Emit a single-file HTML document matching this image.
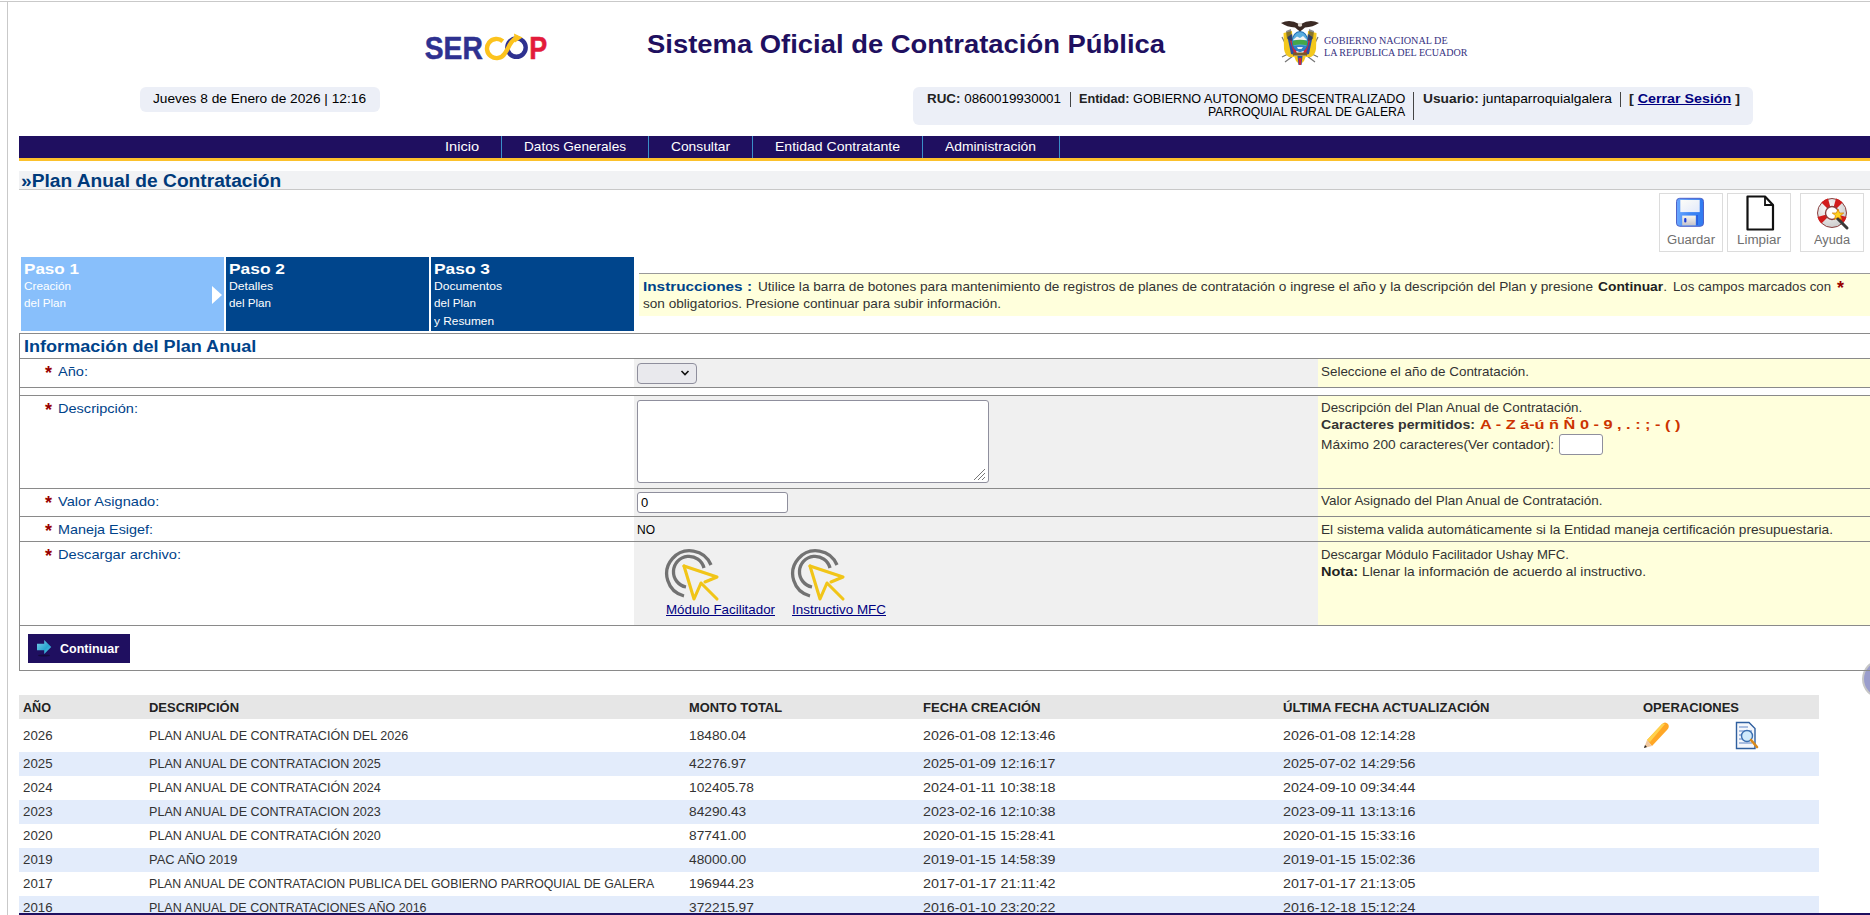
<!DOCTYPE html>
<html><head><meta charset="utf-8"><style>
html,body{margin:0;padding:0;background:#fff;width:1870px;height:915px;overflow:hidden;position:relative;font-family:"Liberation Sans",sans-serif}
.t{position:absolute;white-space:nowrap;transform-origin:0 0}
.r{position:absolute}
</style></head><body>
<div class="r" style="left:1862px;top:660px;width:32px;height:34px;border-radius:50%;background:#9a9dcc;border:2px solid #c6c6c6"></div>
<!-- page frame -->
<div class="r" style="left:0;top:1px;width:1870px;height:1px;background:#c9c9c9"></div>
<div class="r" style="left:7px;top:1px;width:1px;height:914px;background:#c9c9c9"></div>

<!-- SERCOP logo -->
<svg class="r" style="left:420px;top:30px" width="135" height="35" viewBox="420 30 135 35">
  <text x="424.8" y="58.8" font-family="Liberation Sans" font-weight="bold" font-size="31.5" fill="#2e3190" stroke="#2e3190" stroke-width="0.5" textLength="58" lengthAdjust="spacingAndGlyphs">SER</text>
  <circle cx="516.5" cy="47.6" r="9.2" fill="none" stroke="#2e3190" stroke-width="4.4"/>
  <path d="M502.8,41.2 A9.6,9.6 0 1 0 504.6,53.8 L507.6,49 C510.6,42 513,39 518,37" fill="none" stroke="#fcc31e" stroke-width="4.4"/>
  <path d="M514,33.5 L522.5,37.5 L515,42.5 Z" fill="#fcc31e"/>
  <text x="529.2" y="58.8" font-family="Liberation Sans" font-weight="bold" font-size="31.5" fill="#e31b3b" stroke="#e31b3b" stroke-width="0.5" textLength="18" lengthAdjust="spacingAndGlyphs">P</text>
</svg>

<!-- Coat of arms -->
<svg class="r" style="left:1276px;top:15px" width="48" height="54" viewBox="0 0 48 54">
  <path d="M6,22 L14,38 M42,22 L34,38" stroke="#777" stroke-width="1.2"/>
  <path d="M6,42 L16,37 M42,42 L32,37 M9,47 L17,41 M39,47 L31,41" stroke="#777" stroke-width="1.2"/>
  <path d="M7.5,18 L16,16 L18,42 L13,42 Q9,40 8,34 Z" fill="#f3c81c"/>
  <path d="M40.5,18 L32,16 L30,42 L35,42 Q39,40 40,34 Z" fill="#f3c81c"/>
  <path d="M11.5,22 L16,19 L19,40 L15,39 Z" fill="#2b4fa2"/>
  <path d="M36.5,22 L32,19 L29,40 L33,39 Z" fill="#2b4fa2"/>
  <path d="M14,26 L17,23 L21,39 L18,38 Z" fill="#d0263a"/>
  <path d="M34,26 L31,23 L27,39 L30,38 Z" fill="#d0263a"/>
  <path d="M10,16 L15,14 L16,26 L11,24 Z" fill="#333" opacity="0.55"/>
  <path d="M38,16 L33,14 L32,26 L37,24 Z" fill="#333" opacity="0.55"/>
  <ellipse cx="24" cy="26.5" rx="8.3" ry="10.5" fill="#1f6fb5"/>
  <ellipse cx="24" cy="26.5" rx="7.3" ry="9.5" fill="#5aaee0"/>
  <path d="M17,25 L21,21.5 L24,23 L27,21 L31,25 Z" fill="#f4f4f4"/>
  <path d="M16.8,26 Q24,23.5 31.2,26 L31,30.5 Q24,28.5 17,30.5 Z" fill="#46a64a"/>
  <path d="M17.5,31 Q24,29.5 30.5,31 Q29,36 24,36.5 Q19,36 17.5,31 Z" fill="#2f7fc6"/>
  <path d="M21,32 L27,32 L25.5,34 L22,34 Z" fill="#eee"/>
  <rect x="17" y="37.5" width="14" height="3.2" fill="#7a5a28"/>
  <path d="M18,41 L22,41 L23,49 L20,46 Z" fill="#f3c81c"/>
  <path d="M30,41 L26,41 L25,49 L28,46 Z" fill="#f3c81c"/>
  <path d="M21.5,41 L26.5,41 L25.5,50 L22.5,50 Z" fill="#2b4fa2"/>
  <path d="M22.5,43 L25.5,43 L25,50 L23,50 Z" fill="#d0263a"/>
  <path d="M5,8 Q14,3.5 23,9 Q24,8 25,9 Q34,3.5 43,8 Q37,12 29,12.5 L26,15 L24,16.5 L22,15 L19,12.5 Q11,12 5,8 Z" fill="#3b2a24"/>
  <ellipse cx="24" cy="10" rx="2.2" ry="1.8" fill="#e8e0d8"/>
</svg>

<!-- date box & user box -->
<div class="r" style="left:140px;top:87px;width:240px;height:25px;border-radius:6px;background:#eceff7"></div>
<div class="r" style="left:913px;top:87px;width:840px;height:38px;border-radius:6px;background:#eceff7"></div>
<div class="r" style="left:1070px;top:92px;width:1px;height:15px;background:#444"></div>
<div class="r" style="left:1413px;top:92px;width:1px;height:28px;background:#444"></div>
<div class="r" style="left:1620px;top:92px;width:1px;height:15px;background:#444"></div>

<!-- nav -->
<div class="r" style="left:19px;top:136px;width:1851px;height:22px;background:#1f0f60"></div>
<div class="r" style="left:19px;top:158px;width:1851px;height:3px;background:#fcc12b"></div>
<div class="r" style="left:501px;top:136px;width:1px;height:22px;background:#3a8fc8"></div>
<div class="r" style="left:648px;top:136px;width:1px;height:22px;background:#3a8fc8"></div>
<div class="r" style="left:752px;top:136px;width:1px;height:22px;background:#3a8fc8"></div>
<div class="r" style="left:922px;top:136px;width:1px;height:22px;background:#3a8fc8"></div>
<div class="r" style="left:1059px;top:136px;width:1px;height:22px;background:#3a8fc8"></div>

<!-- title bar -->
<div class="r" style="left:19px;top:171px;width:1851px;height:18px;background:#f1f2f4"></div>
<div class="r" style="left:19px;top:189px;width:1851px;height:1px;background:#c8c8c8"></div>

<!-- toolbar -->
<div class="r" style="left:1659px;top:193px;width:62px;height:57px;border:1px solid #dcdcdc"></div>
<div class="r" style="left:1727px;top:193px;width:62px;height:57px;border:1px solid #dcdcdc"></div>
<div class="r" style="left:1800px;top:193px;width:62px;height:57px;border:1px solid #dcdcdc"></div>
<svg class="r" style="left:1675px;top:197px" width="31" height="32" viewBox="0 0 31 32">
  <defs>
    <linearGradient id="fg" x1="0" y1="0" x2="1" y2="0"><stop offset="0" stop-color="#6aa8ff"/><stop offset="0.5" stop-color="#3f86f5"/><stop offset="1" stop-color="#2f7af0"/></linearGradient>
    <linearGradient id="fl" x1="0" y1="0" x2="1" y2="1"><stop offset="0" stop-color="#fdfdf8"/><stop offset="1" stop-color="#e2e9fb"/></linearGradient>
    <linearGradient id="fs" x1="0" y1="0" x2="0" y2="1"><stop offset="0" stop-color="#f8f6ee"/><stop offset="1" stop-color="#c4c2cc"/></linearGradient>
  </defs>
  <rect x="1.5" y="1.3" width="27" height="28" rx="3.2" fill="url(#fg)" stroke="#4f62c8" stroke-width="1"/>
  <rect x="5.3" y="2.9" width="19.4" height="12.2" fill="url(#fl)"/>
  <rect x="7.2" y="18.6" width="13.6" height="9.8" fill="url(#fs)"/>
  <rect x="9.2" y="21" width="2.2" height="4.4" rx="1" fill="#1638d8"/>
  <rect x="21.2" y="18" width="1.8" height="10" fill="#2a5fe0"/>
</svg>
<svg class="r" style="left:1745px;top:195px" width="32" height="37" viewBox="0 0 32 37">
  <path d="M2.5,1.5 L20,1.5 L28,10 L28,34.5 L2.5,34.5 Z" fill="#fff" stroke="#111" stroke-width="2.2" stroke-linejoin="round"/>
  <path d="M20,1.5 L20,10 L28,10" fill="none" stroke="#111" stroke-width="1.8"/>
</svg>
<svg class="r" style="left:1815px;top:196px" width="36" height="36" viewBox="0 0 36 36">
  <defs><radialGradient id="lb" cx="0.4" cy="0.35" r="0.7"><stop offset="0" stop-color="#ffffff"/><stop offset="1" stop-color="#c9c9c9"/></radialGradient></defs>
  <circle cx="17" cy="17" r="14.5" fill="url(#lb)" stroke="#8a4040" stroke-width="1"/>
  <g fill="#d21c1c">
    <path d="M17,17 L6.4,6.4 A15,15 0 0 1 13,2.5 Z"/>
    <path d="M17,17 L21,2.5 A15,15 0 0 1 27.6,6.4 Z"/>
    <path d="M17,17 L2.5,21 A15,15 0 0 0 6.4,27.6 Z"/>
    <path d="M17,17 L27.6,27.6 A15,15 0 0 0 31.5,21 Z"/>
  </g>
  <circle cx="17" cy="17" r="6.5" fill="#fff" stroke="#8a4040" stroke-width="1.4"/>
  <path d="M22,22 L32,32" stroke="#3a3a3a" stroke-width="3" stroke-linecap="round"/>
  <path d="M23,13 L24.6,17 L28.8,17 L25.5,19.6 L26.6,23.6 L23,21.2 L19.4,23.6 L20.5,19.6 L17.2,17 L21.4,17 Z" fill="#ffd21f" stroke="#d67a00" stroke-width="0.7"/>
</svg>

<!-- steps -->
<div class="r" style="left:21px;top:257px;width:203px;height:74px;background:#88bffb"></div>
<div class="r" style="left:226px;top:257px;width:203px;height:74px;background:#00458c"></div>
<div class="r" style="left:431px;top:257px;width:203px;height:74px;background:#00458c"></div>
<svg class="r" style="left:210px;top:284px" width="14" height="22" viewBox="0 0 14 22"><path d="M2,2 L12,11 L2,20 Z" fill="#fff"/></svg>

<!-- instructions -->
<div class="r" style="left:639px;top:273px;width:1231px;height:1px;background:#999"></div>
<div class="r" style="left:639px;top:274px;width:1231px;height:42px;background:#ffffdc"></div>

<!-- form background columns -->
<div class="r" style="left:634px;top:359px;width:684px;height:28px;background:#f0f0f0"></div>
<div class="r" style="left:1318px;top:359px;width:552px;height:28px;background:#ffffdc"></div>
<div class="r" style="left:634px;top:396px;width:684px;height:229px;background:#f0f0f0"></div>
<div class="r" style="left:1318px;top:396px;width:552px;height:229px;background:#ffffdc"></div>

<!-- form lines -->
<div class="r" style="left:19px;top:333px;width:1851px;height:1px;background:#8a8a8a"></div>
<div class="r" style="left:19px;top:358px;width:1851px;height:1px;background:#8a8a8a"></div>
<div class="r" style="left:19px;top:387px;width:1851px;height:1px;background:#8a8a8a"></div>
<div class="r" style="left:19px;top:395px;width:1851px;height:1px;background:#8a8a8a"></div>
<div class="r" style="left:19px;top:488px;width:1851px;height:1px;background:#8a8a8a"></div>
<div class="r" style="left:19px;top:516px;width:1851px;height:1px;background:#8a8a8a"></div>
<div class="r" style="left:19px;top:541px;width:1851px;height:1px;background:#8a8a8a"></div>
<div class="r" style="left:19px;top:625px;width:1851px;height:1px;background:#8a8a8a"></div>
<div class="r" style="left:19px;top:670px;width:1851px;height:1px;background:#8a8a8a"></div>
<div class="r" style="left:19px;top:333px;width:1px;height:338px;background:#8a8a8a"></div>

<!-- controls -->
<div class="r" style="left:637px;top:363px;width:58px;height:19px;border:1px solid #8f8f9d;border-radius:4px;background:#e9e9ed"></div>
<svg class="r" style="left:680px;top:369px" width="10" height="8" viewBox="0 0 10 8"><path d="M1.5,2 L5,5.5 L8.5,2" fill="none" stroke="#111" stroke-width="1.6"/></svg>
<div class="r" style="left:637px;top:400px;width:350px;height:81px;border:1px solid #8f8f9d;border-radius:3px;background:#fff"></div>
<svg class="r" style="left:970px;top:465px" width="16" height="16" viewBox="0 0 16 16"><path d="M4,15 L15,4 M8,15 L15,8 M12,15 L15,12" stroke="#777" stroke-width="1"/></svg>
<div class="r" style="left:637px;top:492px;width:149px;height:19px;border:1px solid #8f8f9d;border-radius:3px;background:#fff"></div>
<div class="r" style="left:1559px;top:434px;width:42px;height:19px;border:1px solid #8f8f9d;border-radius:3px;background:#fff"></div>

<!-- click icons -->
<svg class="r" style="left:664px;top:547px" width="58" height="58" viewBox="664 547 58 58">
  <path d="M684,596 A23,23 0 1 1 711,565" fill="none" stroke="#727272" stroke-width="3.3"/>
  <path d="M686,587 A15.5,15.5 0 1 1 704,568" fill="none" stroke="#727272" stroke-width="3.3"/>
  <path d="M684,566 L694,599 L701,583 L717,599" fill="none" stroke="#f1c518" stroke-width="3.1" stroke-linejoin="round" stroke-linecap="round"/>
  <path d="M684,566 L717,577 L705,582" fill="none" stroke="#f1c518" stroke-width="3.1" stroke-linejoin="round" stroke-linecap="round"/>
</svg>
<svg class="r" style="left:790px;top:547px" width="58" height="58" viewBox="664 547 58 58">
  <path d="M684,596 A23,23 0 1 1 711,565" fill="none" stroke="#727272" stroke-width="3.3"/>
  <path d="M686,587 A15.5,15.5 0 1 1 704,568" fill="none" stroke="#727272" stroke-width="3.3"/>
  <path d="M684,566 L694,599 L701,583 L717,599" fill="none" stroke="#f1c518" stroke-width="3.1" stroke-linejoin="round" stroke-linecap="round"/>
  <path d="M684,566 L717,577 L705,582" fill="none" stroke="#f1c518" stroke-width="3.1" stroke-linejoin="round" stroke-linecap="round"/>
</svg>

<!-- continuar button -->
<div class="r" style="left:28px;top:634px;width:102px;height:29px;background:#1f0f60"></div>
<svg class="r" style="left:36px;top:639px" width="17" height="18" viewBox="0 0 17 18">
  <defs><linearGradient id="ca" x1="0" y1="0" x2="1" y2="1"><stop offset="0" stop-color="#7fd0ea"/><stop offset="0.6" stop-color="#2aa6d0"/><stop offset="1" stop-color="#5cc4e4"/></linearGradient></defs>
  <ellipse cx="8" cy="16.5" rx="6" ry="1" fill="#000" opacity="0.35"/>
  <path d="M1,4.8 L8.2,4.8 L8.2,1 L15.2,8 L8.2,15 L8.2,11.2 L1,11.2 Z" fill="url(#ca)"/>
</svg>

<!-- results table -->
<div class="r" style="left:19px;top:695px;width:1800px;height:24px;background:#e6e6e6"></div>
<div class="r" style="left:19px;top:752px;width:1800px;height:24px;background:#e3ecfb"></div>
<div class="r" style="left:19px;top:800px;width:1800px;height:24px;background:#e3ecfb"></div>
<div class="r" style="left:19px;top:848px;width:1800px;height:24px;background:#e3ecfb"></div>
<div class="r" style="left:19px;top:896px;width:1800px;height:24px;background:#e3ecfb"></div>
<svg class="r" style="left:1642px;top:720px" width="28" height="30" viewBox="0 0 28 30">
  <path d="M5,20 L20,4 Q23,1 26,4 Q28,7 25,10 L10,26 Z" fill="#ffa726"/>
  <path d="M5,20 L20,4 Q22,3 23,4 L8,22 Z" fill="#ffd24d"/>
  <path d="M5,20 L10,26 L2,28 Z" fill="#f0c8a0"/>
  <path d="M3,25 L2,28 L5,27 Z" fill="#222"/>
</svg>
<svg class="r" style="left:1734px;top:720px" width="28" height="32" viewBox="0 0 28 32">
  <path d="M2.5,2.5 L15,2.5 L21,8.5 L21,28.5 L2.5,28.5 Z" fill="#f4f7fc" stroke="#2f5f9f" stroke-width="1.4"/>
  <path d="M5,7 H14 M5,11 H18 M5,15 H18 M5,19 H18 M5,23 H18" stroke="#5f86c6" stroke-width="1.1"/>
  <circle cx="13" cy="16" r="5.5" fill="#cfe9fb" stroke="#3b6fb0" stroke-width="1.4"/>
  <path d="M17,20 L23,27" stroke="#d98a1c" stroke-width="2.6" stroke-linecap="round"/>
</svg>

<!-- bottom navy line -->
<div class="r" style="left:19px;top:913px;width:1851px;height:2px;background:#1f0f60"></div>

<!-- floating circle at right edge -->


<div class="t" style="left:647px;top:31px;font-size:26px;line-height:26px;transform:scaleX(1.0545);font-family:'Liberation Sans';font-weight:bold;color:#1f1060">Sistema Oficial de Contratación Pública</div>
<div class="t" style="left:1324px;top:35px;font-size:11px;line-height:11px;transform:scaleX(0.9224);font-family:'Liberation Serif';color:#36327f">GOBIERNO NACIONAL DE</div>
<div class="t" style="left:1324px;top:47px;font-size:11px;line-height:11px;transform:scaleX(0.9144);font-family:'Liberation Serif';color:#36327f">LA REPUBLICA DEL ECUADOR</div>
<div class="t" style="left:153px;top:92px;font-size:13px;line-height:13px;transform:scaleX(1.0537);font-family:'Liberation Sans';color:#000">Jueves 8 de Enero de 2026 | 12:16</div>
<div class="t" style="left:927px;top:92px;font-size:13px;line-height:13px;transform:scaleX(1.0300);font-family:'Liberation Sans';color:#000"><span style="font-weight:bold;color:#222">RUC:</span> 0860019930001</div>
<div class="t" style="left:1079px;top:92px;font-size:13px;line-height:13px;transform:scaleX(0.9722);font-family:'Liberation Sans';color:#000"><span style="font-weight:bold;color:#222">Entidad:</span> GOBIERNO AUTONOMO DESCENTRALIZADO</div>
<div class="t" style="left:1208px;top:105px;font-size:13px;line-height:13px;transform:scaleX(0.9429);font-family:'Liberation Sans';color:#000">PARROQUIAL RURAL DE GALERA</div>
<div class="t" style="left:1423px;top:92px;font-size:13px;line-height:13px;transform:scaleX(1.0589);font-family:'Liberation Sans';color:#000"><span style="font-weight:bold;color:#222">Usuario:</span> juntaparroquialgalera</div>
<div class="t" style="left:1629px;top:92px;font-size:13px;line-height:13px;transform:scaleX(1.0975);font-family:'Liberation Sans';color:#000"><span style="font-weight:bold;color:#222">[ </span><span style="font-weight:bold;color:#000080;text-decoration:underline">Cerrar Sesión</span><span style="font-weight:bold;color:#222"> ]</span></div>
<div class="t" style="left:445px;top:140px;font-size:13px;line-height:13px;transform:scaleX(1.1203);font-family:'Liberation Sans';color:#fff">Inicio</div>
<div class="t" style="left:524px;top:140px;font-size:13px;line-height:13px;transform:scaleX(1.0456);font-family:'Liberation Sans';color:#fff">Datos Generales</div>
<div class="t" style="left:671px;top:140px;font-size:13px;line-height:13px;transform:scaleX(1.0604);font-family:'Liberation Sans';color:#fff">Consultar</div>
<div class="t" style="left:775px;top:140px;font-size:13px;line-height:13px;transform:scaleX(1.0810);font-family:'Liberation Sans';color:#fff">Entidad Contratante</div>
<div class="t" style="left:945px;top:140px;font-size:13px;line-height:13px;transform:scaleX(1.0674);font-family:'Liberation Sans';color:#fff">Administración</div>
<div class="t" style="left:21px;top:172px;font-size:18px;line-height:18px;transform:scaleX(1.0651);font-family:'Liberation Sans';font-weight:bold;color:#003a7a">»Plan Anual de Contratación</div>
<div class="t" style="left:1667px;top:234px;font-size:12px;line-height:12px;transform:scaleX(1.0904);font-family:'Liberation Sans';color:#6f6f6f">Guardar</div>
<div class="t" style="left:1737px;top:234px;font-size:12px;line-height:12px;transform:scaleX(1.1183);font-family:'Liberation Sans';color:#6f6f6f">Limpiar</div>
<div class="t" style="left:1814px;top:234px;font-size:12px;line-height:12px;transform:scaleX(1.0648);font-family:'Liberation Sans';color:#6f6f6f">Ayuda</div>
<div class="t" style="left:24px;top:261px;font-size:15px;line-height:15px;transform:scaleX(1.1373);font-family:'Liberation Sans';font-weight:bold;color:#fff">Paso 1</div>
<div class="t" style="left:24px;top:281px;font-size:11px;line-height:11px;transform:scaleX(1.0677);font-family:'Liberation Sans';color:#fff">Creación</div>
<div class="t" style="left:24px;top:298px;font-size:11px;line-height:11px;transform:scaleX(1.0566);font-family:'Liberation Sans';color:#fff">del Plan</div>
<div class="t" style="left:229px;top:261px;font-size:15px;line-height:15px;transform:scaleX(1.1579);font-family:'Liberation Sans';font-weight:bold;color:#fff">Paso 2</div>
<div class="t" style="left:229px;top:281px;font-size:11px;line-height:11px;transform:scaleX(1.1072);font-family:'Liberation Sans';color:#fff">Detalles</div>
<div class="t" style="left:229px;top:298px;font-size:11px;line-height:11px;transform:scaleX(1.0566);font-family:'Liberation Sans';color:#fff">del Plan</div>
<div class="t" style="left:434px;top:261px;font-size:15px;line-height:15px;transform:scaleX(1.1579);font-family:'Liberation Sans';font-weight:bold;color:#fff">Paso 3</div>
<div class="t" style="left:434px;top:281px;font-size:11px;line-height:11px;transform:scaleX(1.1012);font-family:'Liberation Sans';color:#fff">Documentos</div>
<div class="t" style="left:434px;top:298px;font-size:11px;line-height:11px;transform:scaleX(1.0566);font-family:'Liberation Sans';color:#fff">del Plan</div>
<div class="t" style="left:434px;top:316px;font-size:11px;line-height:11px;transform:scaleX(1.0785);font-family:'Liberation Sans';color:#fff">y Resumen</div>
<div class="t" style="left:643px;top:280px;font-size:13px;line-height:13px;transform:scaleX(1.1788);font-family:'Liberation Sans';font-weight:bold;color:#00438a">Instrucciones :</div>
<div class="t" style="left:758px;top:280px;font-size:13px;line-height:13px;transform:scaleX(1.0476);font-family:'Liberation Sans';color:#333">Utilice la barra de botones para mantenimiento de registros de planes de contratación o ingrese el año y la descripción del Plan y presione</div>
<div class="t" style="left:1598px;top:280px;font-size:13px;line-height:13px;transform:scaleX(1.0616);font-family:'Liberation Sans';color:#333"><span style="font-weight:bold;color:#222">Continuar</span>.</div>
<div class="t" style="left:1673px;top:280px;font-size:13px;line-height:13px;transform:scaleX(1.0170);font-family:'Liberation Sans';color:#333">Los campos marcados con</div>
<div class="t" style="left:1837px;top:279px;font-size:18px;line-height:18px;font-family:'Liberation Sans';font-weight:bold;color:#990000">*</div>
<div class="t" style="left:643px;top:297px;font-size:13px;line-height:13px;transform:scaleX(1.0452);font-family:'Liberation Sans';color:#333">son obligatorios. Presione continuar para subir información.</div>
<div class="t" style="left:24px;top:339px;font-size:16px;line-height:16px;transform:scaleX(1.1297);font-family:'Liberation Sans';font-weight:bold;color:#00438a">Información del Plan Anual</div>
<div class="t" style="left:45px;top:364px;font-size:18px;line-height:18px;font-family:'Liberation Sans';font-weight:bold;color:#990000">*</div>
<div class="t" style="left:58px;top:365px;font-size:13px;line-height:13px;transform:scaleX(1.1218);font-family:'Liberation Sans';color:#00438a">Año:</div>
<div class="t" style="left:45px;top:401px;font-size:18px;line-height:18px;font-family:'Liberation Sans';font-weight:bold;color:#990000">*</div>
<div class="t" style="left:58px;top:402px;font-size:13px;line-height:13px;transform:scaleX(1.1185);font-family:'Liberation Sans';color:#00438a">Descripción:</div>
<div class="t" style="left:45px;top:494px;font-size:18px;line-height:18px;font-family:'Liberation Sans';font-weight:bold;color:#990000">*</div>
<div class="t" style="left:58px;top:495px;font-size:13px;line-height:13px;transform:scaleX(1.1232);font-family:'Liberation Sans';color:#00438a">Valor Asignado:</div>
<div class="t" style="left:45px;top:522px;font-size:18px;line-height:18px;font-family:'Liberation Sans';font-weight:bold;color:#990000">*</div>
<div class="t" style="left:58px;top:523px;font-size:13px;line-height:13px;transform:scaleX(1.1048);font-family:'Liberation Sans';color:#00438a">Maneja Esigef:</div>
<div class="t" style="left:45px;top:547px;font-size:18px;line-height:18px;font-family:'Liberation Sans';font-weight:bold;color:#990000">*</div>
<div class="t" style="left:58px;top:548px;font-size:13px;line-height:13px;transform:scaleX(1.1274);font-family:'Liberation Sans';color:#00438a">Descargar archivo:</div>
<div class="t" style="left:637px;top:523px;font-size:13px;line-height:13px;transform:scaleX(0.9231);font-family:'Liberation Sans';color:#000">NO</div>
<div class="t" style="left:641px;top:496px;font-size:13px;line-height:13px;font-family:'Liberation Sans';color:#000">0</div>
<div class="t" style="left:1321px;top:365px;font-size:13px;line-height:13px;transform:scaleX(1.0316);font-family:'Liberation Sans';color:#333">Seleccione el año de Contratación.</div>
<div class="t" style="left:1321px;top:401px;font-size:13px;line-height:13px;transform:scaleX(1.0300);font-family:'Liberation Sans';color:#333">Descripción del Plan Anual de Contratación.</div>
<div class="t" style="left:1321px;top:494px;font-size:13px;line-height:13px;transform:scaleX(1.0341);font-family:'Liberation Sans';color:#333">Valor Asignado del Plan Anual de Contratación.</div>
<div class="t" style="left:1321px;top:523px;font-size:13px;line-height:13px;transform:scaleX(1.0513);font-family:'Liberation Sans';color:#333">El sistema valida automáticamente si la Entidad maneja certificación presupuestaria.</div>
<div class="t" style="left:1321px;top:548px;font-size:13px;line-height:13px;transform:scaleX(1.0096);font-family:'Liberation Sans';color:#333">Descargar Módulo Facilitador Ushay MFC.</div>
<div class="t" style="left:1321px;top:418px;font-size:13px;line-height:13px;transform:scaleX(1.0875);font-family:'Liberation Sans';font-weight:bold;color:#333">Caracteres permitidos:</div>
<div class="t" style="left:1480px;top:418px;font-size:13px;line-height:13px;transform:scaleX(1.2537);font-family:'Liberation Sans';font-weight:bold;color:#cc3300">A - Z á-ú ñ Ñ 0 - 9 , . : ; - ( )</div>
<div class="t" style="left:1321px;top:438px;font-size:13px;line-height:13px;transform:scaleX(1.0538);font-family:'Liberation Sans';color:#333">Máximo 200 caracteres(Ver contador):</div>
<div class="t" style="left:1321px;top:565px;font-size:13px;line-height:13px;transform:scaleX(1.1139);font-family:'Liberation Sans';font-weight:bold;color:#222">Nota:</div>
<div class="t" style="left:1362px;top:565px;font-size:13px;line-height:13px;transform:scaleX(1.0565);font-family:'Liberation Sans';color:#333">Llenar la información de acuerdo al instructivo.</div>
<div class="t" style="left:666px;top:603px;font-size:13px;line-height:13px;transform:scaleX(1.0262);font-family:'Liberation Sans';color:#000080;text-decoration:underline">Módulo Facilitador</div>
<div class="t" style="left:792px;top:603px;font-size:13px;line-height:13px;transform:scaleX(1.0328);font-family:'Liberation Sans';color:#000080;text-decoration:underline">Instructivo MFC</div>
<div class="t" style="left:60px;top:642px;font-size:13px;line-height:13px;transform:scaleX(0.9612);font-family:'Liberation Sans';font-weight:bold;color:#fff">Continuar</div>
<div class="t" style="left:23px;top:701px;font-size:13px;line-height:13px;transform:scaleX(0.9693);font-family:'Liberation Sans';font-weight:bold;color:#222">AÑO</div>
<div class="t" style="left:149px;top:701px;font-size:13px;line-height:13px;transform:scaleX(0.9968);font-family:'Liberation Sans';font-weight:bold;color:#222">DESCRIPCIÓN</div>
<div class="t" style="left:689px;top:701px;font-size:13px;line-height:13px;transform:scaleX(0.9906);font-family:'Liberation Sans';font-weight:bold;color:#222">MONTO TOTAL</div>
<div class="t" style="left:923px;top:701px;font-size:13px;line-height:13px;transform:scaleX(1.0023);font-family:'Liberation Sans';font-weight:bold;color:#222">FECHA CREACIÓN</div>
<div class="t" style="left:1283px;top:701px;font-size:13px;line-height:13px;transform:scaleX(1.0048);font-family:'Liberation Sans';font-weight:bold;color:#222">ÚLTIMA FECHA ACTUALIZACIÓN</div>
<div class="t" style="left:1643px;top:701px;font-size:13px;line-height:13px;transform:scaleX(0.9993);font-family:'Liberation Sans';font-weight:bold;color:#222">OPERACIONES</div>
<div class="t" style="left:23px;top:729px;font-size:13px;line-height:13px;transform:scaleX(1.0201);font-family:'Liberation Sans';color:#333">2026</div>
<div class="t" style="left:149px;top:729px;font-size:13px;line-height:13px;transform:scaleX(0.9670);font-family:'Liberation Sans';color:#333">PLAN ANUAL DE CONTRATACIÓN DEL 2026</div>
<div class="t" style="left:689px;top:729px;font-size:13px;line-height:13px;transform:scaleX(1.0560);font-family:'Liberation Sans';color:#333">18480.04</div>
<div class="t" style="left:923px;top:729px;font-size:13px;line-height:13px;transform:scaleX(1.0976);font-family:'Liberation Sans';color:#333">2026-01-08 12:13:46</div>
<div class="t" style="left:1283px;top:729px;font-size:13px;line-height:13px;transform:scaleX(1.0976);font-family:'Liberation Sans';color:#333">2026-01-08 12:14:28</div>
<div class="t" style="left:23px;top:757px;font-size:13px;line-height:13px;transform:scaleX(1.0201);font-family:'Liberation Sans';color:#333">2025</div>
<div class="t" style="left:149px;top:757px;font-size:13px;line-height:13px;transform:scaleX(0.9675);font-family:'Liberation Sans';color:#333">PLAN ANUAL DE CONTRATACION 2025</div>
<div class="t" style="left:689px;top:757px;font-size:13px;line-height:13px;transform:scaleX(1.0560);font-family:'Liberation Sans';color:#333">42276.97</div>
<div class="t" style="left:923px;top:757px;font-size:13px;line-height:13px;transform:scaleX(1.0976);font-family:'Liberation Sans';color:#333">2025-01-09 12:16:17</div>
<div class="t" style="left:1283px;top:757px;font-size:13px;line-height:13px;transform:scaleX(1.0976);font-family:'Liberation Sans';color:#333">2025-07-02 14:29:56</div>
<div class="t" style="left:23px;top:781px;font-size:13px;line-height:13px;transform:scaleX(1.0201);font-family:'Liberation Sans';color:#333">2024</div>
<div class="t" style="left:149px;top:781px;font-size:13px;line-height:13px;transform:scaleX(0.9675);font-family:'Liberation Sans';color:#333">PLAN ANUAL DE CONTRATACIÓN 2024</div>
<div class="t" style="left:689px;top:781px;font-size:13px;line-height:13px;transform:scaleX(1.0560);font-family:'Liberation Sans';color:#333">102405.78</div>
<div class="t" style="left:923px;top:781px;font-size:13px;line-height:13px;transform:scaleX(1.1065);font-family:'Liberation Sans';color:#333">2024-01-11 10:38:18</div>
<div class="t" style="left:1283px;top:781px;font-size:13px;line-height:13px;transform:scaleX(1.0976);font-family:'Liberation Sans';color:#333">2024-09-10 09:34:44</div>
<div class="t" style="left:23px;top:805px;font-size:13px;line-height:13px;transform:scaleX(1.0201);font-family:'Liberation Sans';color:#333">2023</div>
<div class="t" style="left:149px;top:805px;font-size:13px;line-height:13px;transform:scaleX(0.9675);font-family:'Liberation Sans';color:#333">PLAN ANUAL DE CONTRATACION 2023</div>
<div class="t" style="left:689px;top:805px;font-size:13px;line-height:13px;transform:scaleX(1.0560);font-family:'Liberation Sans';color:#333">84290.43</div>
<div class="t" style="left:923px;top:805px;font-size:13px;line-height:13px;transform:scaleX(1.0976);font-family:'Liberation Sans';color:#333">2023-02-16 12:10:38</div>
<div class="t" style="left:1283px;top:805px;font-size:13px;line-height:13px;transform:scaleX(1.1065);font-family:'Liberation Sans';color:#333">2023-09-11 13:13:16</div>
<div class="t" style="left:23px;top:829px;font-size:13px;line-height:13px;transform:scaleX(1.0201);font-family:'Liberation Sans';color:#333">2020</div>
<div class="t" style="left:149px;top:829px;font-size:13px;line-height:13px;transform:scaleX(0.9675);font-family:'Liberation Sans';color:#333">PLAN ANUAL DE CONTRATACIÓN 2020</div>
<div class="t" style="left:689px;top:829px;font-size:13px;line-height:13px;transform:scaleX(1.0560);font-family:'Liberation Sans';color:#333">87741.00</div>
<div class="t" style="left:923px;top:829px;font-size:13px;line-height:13px;transform:scaleX(1.0976);font-family:'Liberation Sans';color:#333">2020-01-15 15:28:41</div>
<div class="t" style="left:1283px;top:829px;font-size:13px;line-height:13px;transform:scaleX(1.0976);font-family:'Liberation Sans';color:#333">2020-01-15 15:33:16</div>
<div class="t" style="left:23px;top:853px;font-size:13px;line-height:13px;transform:scaleX(1.0201);font-family:'Liberation Sans';color:#333">2019</div>
<div class="t" style="left:149px;top:853px;font-size:13px;line-height:13px;transform:scaleX(0.9905);font-family:'Liberation Sans';color:#333">PAC AÑO 2019</div>
<div class="t" style="left:689px;top:853px;font-size:13px;line-height:13px;transform:scaleX(1.0560);font-family:'Liberation Sans';color:#333">48000.00</div>
<div class="t" style="left:923px;top:853px;font-size:13px;line-height:13px;transform:scaleX(1.0976);font-family:'Liberation Sans';color:#333">2019-01-15 14:58:39</div>
<div class="t" style="left:1283px;top:853px;font-size:13px;line-height:13px;transform:scaleX(1.0976);font-family:'Liberation Sans';color:#333">2019-01-15 15:02:36</div>
<div class="t" style="left:23px;top:877px;font-size:13px;line-height:13px;transform:scaleX(1.0201);font-family:'Liberation Sans';color:#333">2017</div>
<div class="t" style="left:149px;top:877px;font-size:13px;line-height:13px;transform:scaleX(0.9476);font-family:'Liberation Sans';color:#333">PLAN ANUAL DE CONTRATACION PUBLICA DEL GOBIERNO PARROQUIAL DE GALERA</div>
<div class="t" style="left:689px;top:877px;font-size:13px;line-height:13px;transform:scaleX(1.0560);font-family:'Liberation Sans';color:#333">196944.23</div>
<div class="t" style="left:923px;top:877px;font-size:13px;line-height:13px;transform:scaleX(1.1065);font-family:'Liberation Sans';color:#333">2017-01-17 21:11:42</div>
<div class="t" style="left:1283px;top:877px;font-size:13px;line-height:13px;transform:scaleX(1.0976);font-family:'Liberation Sans';color:#333">2017-01-17 21:13:05</div>
<div class="t" style="left:23px;top:901px;font-size:13px;line-height:13px;transform:scaleX(1.0201);font-family:'Liberation Sans';color:#333">2016</div>
<div class="t" style="left:149px;top:901px;font-size:13px;line-height:13px;transform:scaleX(0.9638);font-family:'Liberation Sans';color:#333">PLAN ANUAL DE CONTRATACIONES AÑO 2016</div>
<div class="t" style="left:689px;top:901px;font-size:13px;line-height:13px;transform:scaleX(1.0560);font-family:'Liberation Sans';color:#333">372215.97</div>
<div class="t" style="left:923px;top:901px;font-size:13px;line-height:13px;transform:scaleX(1.0976);font-family:'Liberation Sans';color:#333">2016-01-10 23:20:22</div>
<div class="t" style="left:1283px;top:901px;font-size:13px;line-height:13px;transform:scaleX(1.0976);font-family:'Liberation Sans';color:#333">2016-12-18 15:12:24</div>
</body></html>
